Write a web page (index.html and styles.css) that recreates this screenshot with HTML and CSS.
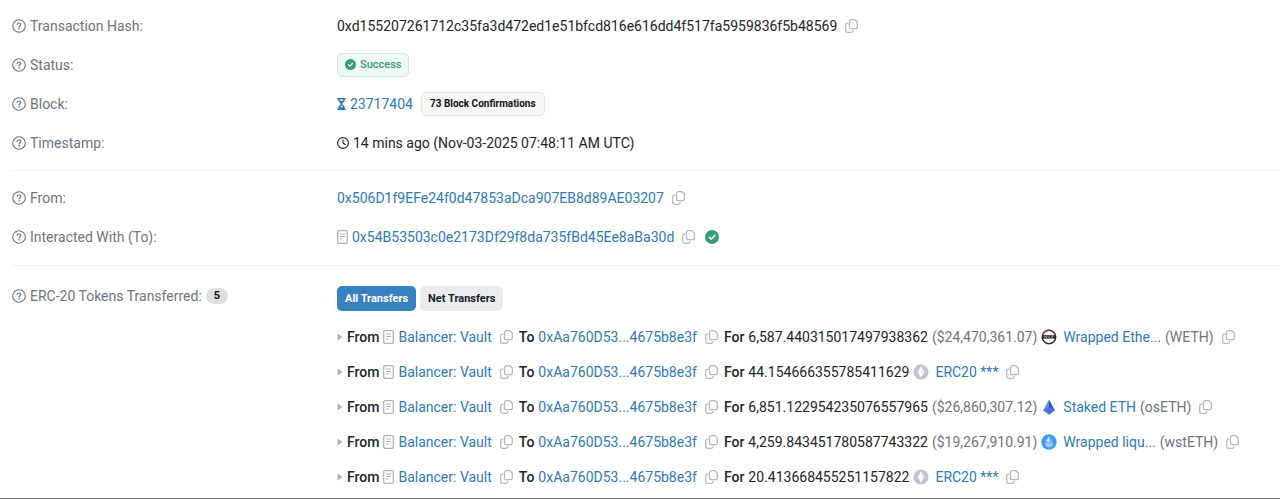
FILE: index.html
```html
<!DOCTYPE html>
<html lang="en">
<head>
  <meta charset="UTF-8">
  <meta name="viewport" content="width=device-width, initial-scale=1.0">
  <title>Transaction Details</title>
  <link rel="stylesheet" href="styles.css">
</head>
<body>
  <svg class="sprite" aria-hidden="true">
    <symbol id="help" viewBox="0 0 14 14">
      <circle cx="7" cy="7" r="6.3" fill="none" stroke="currentColor" stroke-width="1.1"/>
      <path d="M5.2 5.600c0-1 .7-1.600 1.800-1.600s1.800.6 1.800 1.500c0 1.100-1.700 1.200-1.700 2.400" fill="none" stroke="currentColor" stroke-width="1.2" stroke-linecap="round"/>
      <circle cx="7.1" cy="9.900" r=".8" fill="currentColor"/>
    </symbol>
    <symbol id="copy" viewBox="0 0 13 14">
      <path d="M6.300.7h3.500L12.300 3v4.900a1.800 1.800 0 0 1-1.800 1.800H6.300a1.800 1.800 0 0 1-1.800-1.800V2.500A1.800 1.800 0 0 1 6.300.7z" fill="none" stroke="currentColor" stroke-width="1.300"/>
      <path d="M2.900 4.200h-.4A1.800 1.800 0 0 0 .7 6v5.500a1.800 1.800 0 0 0 1.800 1.800h3.700A1.800 1.800 0 0 0 8 11.500" fill="none" stroke="currentColor" stroke-width="1.300" stroke-linecap="round"/>
    </symbol>
    <symbol id="doc" viewBox="0 0 11 14">
      <rect x=".7" y=".7" width="9.600" height="12.600" rx="1.300" fill="none" stroke="currentColor" stroke-width="1.300"/>
      <path d="M3 4h5M3 6.500h5M3 9h2.500" stroke="currentColor" stroke-width="1.100"/>
    </symbol>
    <symbol id="check" viewBox="0 0 14 14">
      <circle cx="7" cy="7" r="7" fill="currentColor"/>
      <path d="M4.300 7.200l2 1.900 3.500-3.700" fill="none" stroke="#fff" stroke-width="1.500" stroke-linecap="round" stroke-linejoin="round"/>
    </symbol>
    <symbol id="hourglass" viewBox="0 0 9 12">
      <path d="M0 0h9v1.300H0zM0 10.700h9V12H0z" fill="currentColor"/>
      <path d="M1.300 1v1.600c0 1.500 2.400 2.500 2.400 3.400S1.300 7.900 1.300 9.400V11h6.400V9.400C7.700 7.900 5.300 6.900 5.300 6s2.400-1.900 2.400-3.400V1z" fill="currentColor"/>
      <path d="M2.700 1.500h3.600v1.200H2.700zM4.500 7.600L6 9.300H3z" fill="#fff"/>
    </symbol>
    <symbol id="clock" viewBox="0 0 12 12">
      <circle cx="6" cy="6" r="5.400" fill="none" stroke="currentColor" stroke-width="1.100"/>
      <path d="M6 2.800V6l2.200 1.500" fill="none" stroke="currentColor" stroke-width="1.100" stroke-linecap="round"/>
    </symbol>
    <symbol id="caret" viewBox="0 0 6 8">
      <path d="M.5.500L5.500 4l-5 3.500z" fill="currentColor"/>
    </symbol>
    <symbol id="weth" viewBox="0 0 16 16">
      <circle cx="8" cy="8" r="6.700" fill="#fff" stroke="#3a3034" stroke-width="1.500"/>
      <path d="M2.100 4.900A6.700 6.700 0 0 1 8 1.300" fill="none" stroke="#c3304f" stroke-width="1.500"/>
      <path d="M1 6.200h13.800v3.400H1z" fill="#2b2226"/>
      <path d="M3 7.100l.8 1.700.8-1.700.8 1.700.8-1.700M7.300 7.200h1.800M7.300 8.700h1.800M10 7.200h2.600M11.300 7.200v1.700" fill="none" stroke="#d8d2d4" stroke-width=".6"/>
    </symbol>
    <symbol id="erc20" viewBox="0 0 16 16">
      <circle cx="8" cy="8" r="7.500" fill="#bfc2d0"/>
      <path d="M8 2.200l3.500 5.900L8 13.600 4.500 8.100z" fill="#fff"/>
      <path d="M8 2.200l3.500 5.900L8 10z" fill="#eceef5"/>
    </symbol>
    <symbol id="oseth" viewBox="0 0 16 16">
      <path d="M8 .5L2.200 11.300 8 15.500z" fill="#6488ec"/>
      <path d="M8 .5l5.800 10.800L8 15.500z" fill="#3d4fc4"/>
      <path d="M2.200 11.300L8 8.500l5.800 2.800L8 15.500z" fill="#4770e0"/>
    </symbol>
    <symbol id="wsteth" viewBox="0 0 16 16">
      <circle cx="8" cy="8" r="7.700" fill="#3c9df4"/>
      <path d="M8 2.400l2.900 4.400L8 8.500 5.100 6.800z" fill="#d5ebff"/>
      <path d="M4.700 7.700L8 9.600l3.300-1.900c1 1.700.7 3.200-.3 4.200a4.200 4.200 0 0 1-6 0c-1-1-1.300-2.500-.3-4.200z" fill="#9ed0ff"/>
      <path d="M8 2.400v6.100l2.900-1.700z" fill="#8bc6ff"/>
    </symbol>
  </svg>

  <main class="details">
    <section class="group">
      <div class="row">
        <div class="label"><svg class="icon-help"><use href="#help"/></svg>Transaction Hash:</div>
        <div class="value">
          <span>0xd155207261712c35fa3d472ed1e51bfcd816e616dd4f517fa5959836f5b48569</span>
          <button class="copy" aria-label="Copy transaction hash"><svg><use href="#copy"/></svg></button>
        </div>
      </div>
      <div class="row">
        <div class="label"><svg class="icon-help"><use href="#help"/></svg>Status:</div>
        <div class="value">
          <span class="badge badge-success"><svg><use href="#check"/></svg>Success</span>
        </div>
      </div>
      <div class="row">
        <div class="label"><svg class="icon-help"><use href="#help"/></svg>Block:</div>
        <div class="value">
          <svg class="icon-hourglass"><use href="#hourglass"/></svg>
          <a href="#">23717404</a>
          <span class="badge badge-light">73 Block Confirmations</span>
        </div>
      </div>
      <div class="row">
        <div class="label"><svg class="icon-help"><use href="#help"/></svg>Timestamp:</div>
        <div class="value">
          <svg class="icon-clock"><use href="#clock"/></svg>
          <span>14 mins ago (Nov-03-2025 07:48:11 AM UTC)</span>
        </div>
      </div>
    </section>

    <section class="group">
      <div class="row">
        <div class="label"><svg class="icon-help"><use href="#help"/></svg>From:</div>
        <div class="value">
          <a href="#">0x506D1f9EFe24f0d47853aDca907EB8d89AE03207</a>
          <button class="copy" aria-label="Copy address"><svg><use href="#copy"/></svg></button>
        </div>
      </div>
      <div class="row">
        <div class="label"><svg class="icon-help"><use href="#help"/></svg>Interacted With (To):</div>
        <div class="value">
          <svg class="icon-doc"><use href="#doc"/></svg>
          <a href="#">0x54B53503c0e2173Df29f8da735fBd45Ee8aBa30d</a>
          <button class="copy" aria-label="Copy address"><svg><use href="#copy"/></svg></button>
          <svg class="icon-check"><use href="#check"/></svg>
        </div>
      </div>
    </section>

    <section class="group tokens">
      <div class="row">
        <div class="label"><svg class="icon-help"><use href="#help"/></svg>ERC-20 Tokens Transferred: <span class="count">5</span></div>
        <div class="value">
          <button class="tab active">All Transfers</button>
          <button class="tab">Net Transfers</button>
        </div>
      </div>
      <ul class="transfers">
        <li>
          <svg class="icon-caret"><use href="#caret"/></svg>
          <b>From</b>
          <svg class="icon-doc"><use href="#doc"/></svg>
          <a href="#">Balancer: Vault</a>
          <button class="copy" aria-label="Copy sender"><svg><use href="#copy"/></svg></button>
          <b>To</b>
          <a href="#">0xAa760D53...4675b8e3f</a>
          <button class="copy" aria-label="Copy receiver"><svg><use href="#copy"/></svg></button>
          <b>For</b>
          <span>6,587.440315017497938362</span>
          <span class="muted">($24,470,361.07)</span>
          <svg class="icon-token"><use href="#weth"/></svg>
          <a href="#">Wrapped Ethe...</a>
          <span class="muted">(WETH)</span>
          <button class="copy" aria-label="Copy token"><svg><use href="#copy"/></svg></button>
        </li>
        <li>
          <svg class="icon-caret"><use href="#caret"/></svg>
          <b>From</b>
          <svg class="icon-doc"><use href="#doc"/></svg>
          <a href="#">Balancer: Vault</a>
          <button class="copy" aria-label="Copy sender"><svg><use href="#copy"/></svg></button>
          <b>To</b>
          <a href="#">0xAa760D53...4675b8e3f</a>
          <button class="copy" aria-label="Copy receiver"><svg><use href="#copy"/></svg></button>
          <b>For</b>
          <span>44.154666355785411629</span>
          <svg class="icon-token"><use href="#erc20"/></svg>
          <a href="#">ERC20 ***</a>
          <button class="copy" aria-label="Copy token"><svg><use href="#copy"/></svg></button>
        </li>
        <li>
          <svg class="icon-caret"><use href="#caret"/></svg>
          <b>From</b>
          <svg class="icon-doc"><use href="#doc"/></svg>
          <a href="#">Balancer: Vault</a>
          <button class="copy" aria-label="Copy sender"><svg><use href="#copy"/></svg></button>
          <b>To</b>
          <a href="#">0xAa760D53...4675b8e3f</a>
          <button class="copy" aria-label="Copy receiver"><svg><use href="#copy"/></svg></button>
          <b>For</b>
          <span>6,851.122954235076557965</span>
          <span class="muted">($26,860,307.12)</span>
          <svg class="icon-token"><use href="#oseth"/></svg>
          <a href="#">Staked ETH</a>
          <span class="muted">(osETH)</span>
          <button class="copy" aria-label="Copy token"><svg><use href="#copy"/></svg></button>
        </li>
        <li>
          <svg class="icon-caret"><use href="#caret"/></svg>
          <b>From</b>
          <svg class="icon-doc"><use href="#doc"/></svg>
          <a href="#">Balancer: Vault</a>
          <button class="copy" aria-label="Copy sender"><svg><use href="#copy"/></svg></button>
          <b>To</b>
          <a href="#">0xAa760D53...4675b8e3f</a>
          <button class="copy" aria-label="Copy receiver"><svg><use href="#copy"/></svg></button>
          <b>For</b>
          <span>4,259.843451780587743322</span>
          <span class="muted">($19,267,910.91)</span>
          <svg class="icon-token"><use href="#wsteth"/></svg>
          <a href="#">Wrapped liqu...</a>
          <span class="muted">(wstETH)</span>
          <button class="copy" aria-label="Copy token"><svg><use href="#copy"/></svg></button>
        </li>
        <li>
          <svg class="icon-caret"><use href="#caret"/></svg>
          <b>From</b>
          <svg class="icon-doc"><use href="#doc"/></svg>
          <a href="#">Balancer: Vault</a>
          <button class="copy" aria-label="Copy sender"><svg><use href="#copy"/></svg></button>
          <b>To</b>
          <a href="#">0xAa760D53...4675b8e3f</a>
          <button class="copy" aria-label="Copy receiver"><svg><use href="#copy"/></svg></button>
          <b>For</b>
          <span>20.413668455251157822</span>
          <svg class="icon-token"><use href="#erc20"/></svg>
          <a href="#">ERC20 ***</a>
          <button class="copy" aria-label="Copy token"><svg><use href="#copy"/></svg></button>
        </li>
      </ul>
    </section>
  </main>
</body>
</html>
```
FILE: styles.css
```css
* {
  box-sizing: border-box;
}

body {
  margin: 0;
  background-color: #fff;
  color: #212529;
  font-family: Roboto, "Liberation Sans", sans-serif;
  font-size: 14px;
  line-height: 20px;
}

a {
  color: #2e7ab8;
  text-decoration: none;
}

button {
  border: none;
  font-family: inherit;
  cursor: pointer;
}

svg {
  display: block;
  flex: none;
}

b {
  font-weight: 500;
}

.sprite {
  display: none;
}

.details {
  padding-left: 12px;
  padding-bottom: 4px;
  border-bottom: 1px solid #77777b;
}

.group {
  padding: 6px 0 8px;
}

.group + .group {
  border-top: 1px solid #f1f2f4;
  padding: 7px 0 9px;
}

.group.tokens {
  padding: 20px 0 0;
}

.row {
  display: grid;
  grid-template-columns: 325px 1fr;
  align-items: center;
  min-height: 39px;
}

.tokens .row {
  align-items: start;
  min-height: 31px;
}

.label {
  display: flex;
  align-items: center;
  gap: 4px;
  color: #6c757d;
}

.value,
.transfers li {
  display: flex;
  align-items: center;
  gap: 4px;
  white-space: nowrap;
}

.icon-help {
  width: 14px;
  height: 14px;
}

.icon-hourglass {
  width: 9px;
  height: 12px;
  color: #2e7ab8;
}

.icon-clock {
  width: 12px;
  height: 12px;
}

.icon-doc {
  width: 11px;
  height: 14px;
  color: #adb5bd;
}

.icon-check {
  width: 14px;
  height: 14px;
  color: #3a9c78;
}

.icon-caret {
  width: 6px;
  height: 8px;
  color: #adb1b8;
}

.icon-token {
  width: 16px;
  height: 16px;
  margin-right: 2px;
}

.copy {
  padding: 0 2px 0 4px;
  background: none;
  color: #b4b9bf;
}

.copy svg {
  width: 13px;
  height: 14px;
}

.copy + .icon-check {
  margin-left: 4px;
}

.badge {
  display: flex;
  align-items: center;
  gap: 4px;
  height: 24px;
  padding: 0 8px;
  border: 1px solid #e3e5e8;
  border-radius: 5px;
  font-size: 10px;
  font-weight: 700;
}

.badge svg {
  width: 11px;
  height: 11px;
}

.badge-success {
  background-color: #eef8f4;
  border-color: #cde9df;
  color: #3a9c78;
  font-size: 11px;
  font-weight: 500;
  padding: 0 7px;
}

.badge-light {
  margin-left: 4px;
  background-color: #f7f7f8;
  color: #111;
}

.count {
  padding: 0 8px;
  border-radius: 8px;
  background-color: #dedfe1;
  color: #111;
  font-size: 11px;
  font-weight: 700;
  line-height: 16px;
}

.tab {
  height: 25px;
  padding: 0 8px;
  border-radius: 5px;
  background-color: #e9ebee;
  color: #111b2b;
  font-size: 11px;
  font-weight: 700;
}

.tab.active {
  background-color: #3881c0;
  color: #fff;
}

.muted {
  color: #6c757d;
}

.transfers {
  margin: 0;
  margin-left: 325px;
  padding: 2px 0 0;
  list-style: none;
}

.transfers li {
  height: 35px;
}
```
